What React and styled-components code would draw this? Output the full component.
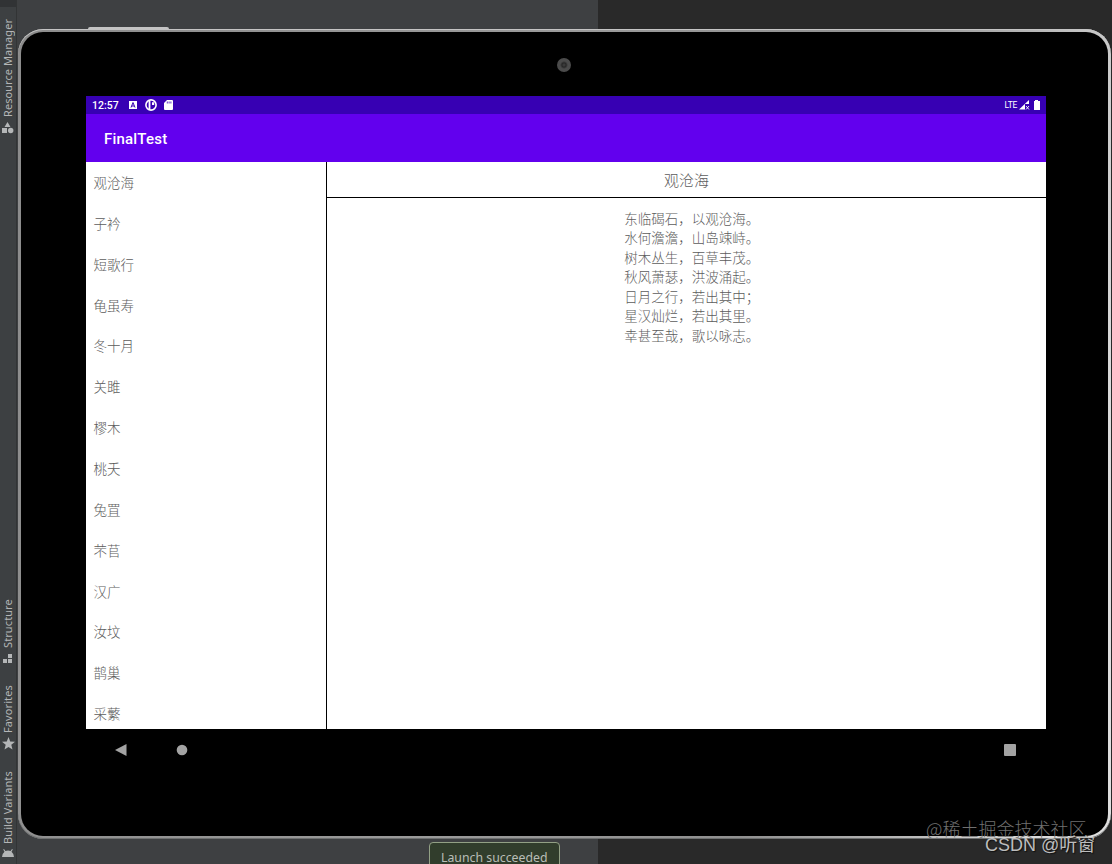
import React, { useState } from "react";
import styled, { createGlobalStyle } from "styled-components";

const GlobalStyle = createGlobalStyle`
    * {
        box-sizing: border-box;
    }

    body {
        margin: 0;
        overflow: hidden;
        background: #3c3f41;
        font-family: Roboto, "Noto Sans CJK SC", sans-serif;
    }
`;

const Page = styled.div`
    position: relative;
    display: flex;
    width: 1112px;
    height: 864px;
    overflow: hidden;
`;

const ToolRail = styled.aside`
    display: flex;
    flex-direction: column;
    width: 17px;
    flex: none;
    padding-top: 17px;
    background: linear-gradient(#313335 7px, #3d4042 7px);
    border-right: 1px solid #323435;
`;

const ToolTab = styled.div`
    display: flex;
    flex-direction: column;
    align-items: center;
    gap: ${(props) => props.$gap || 5}px;
    width: 16px;
    height: ${(props) => props.$height}px;
    margin-top: ${(props) => props.$offset || 0}px;
    color: #b4b6b7;

    svg {
        display: block;
        flex: none;
    }
`;

const ToolLabel = styled.span`
    height: ${(props) => props.$length}px;
    writing-mode: vertical-rl;
    transform: rotate(180deg);
    font-family: "Noto Sans", sans-serif;
    font-size: 11px;
    line-height: 16px;
    letter-spacing: ${(props) => props.$spacing || 0}px;
    white-space: nowrap;
`;

const Workspace = styled.main`
    flex: 1;
    padding: 29px 1px 0 1px;
    background: linear-gradient(90deg, #3e4042 581px, #292929 581px);
`;

const Device = styled.div`
    position: relative;
    width: 1093px;
    height: 810px;
    padding: 3px;
    border-radius: 25px;
    background: linear-gradient(100deg, #8c8c8c 0%, #9a9a9a 45%, #909090 70%, #dedede 95%);
    box-shadow: inset 0 1px 0 #c4c4c4, inset 0 -1px 0 #6e7070;
`;

const PowerKey = styled.div`
    position: absolute;
    top: -2px;
    left: 70px;
    width: 81px;
    height: 3px;
    border-radius: 2px 2px 0 0;
    background: #c4c4c4;
`;

const Bezel = styled.div`
    display: flex;
    flex-direction: column;
    height: 100%;
    padding: 26px 62px 0 65px;
    border-radius: 22px;
    background: #000;
`;

const Camera = styled.div`
    width: 14px;
    height: 14px;
    margin: 0 0 24px 471px;
    border-radius: 50%;
    background: radial-gradient(circle, #3a3a3a 0 1px, #262626 2px, #4b4b4b 4px);
`;

const Screen = styled.div`
    width: 960px;
    height: 633px;
    display: flex;
    flex-direction: column;
    overflow: hidden;
    background: #fff;
`;

const StatusBar = styled.div`
    display: flex;
    align-items: center;
    height: 18px;
    flex: none;
    padding: 0 4px 0 6px;
    background: #3700b3;
    color: #fff;

    svg {
        display: block;
    }
`;

const Clock = styled.span`
    width: 37px;
    font-size: 10.5px;
    font-weight: 500;
`;

const StatusIcons = styled.div`
    display: flex;
    align-items: center;
    gap: 7.5px;
`;

const Signal = styled.div`
    display: flex;
    align-items: center;
    margin-left: auto;
    font-size: 8.5px;
    letter-spacing: -0.3px;
    gap: 2px;
`;

const AppBar = styled.header`
    height: 48px;
    flex: none;
    padding-left: 18px;
    background: #6200ee;
    color: #fff;
    font-size: 15px;
    font-weight: 500;
    line-height: 51px;
    letter-spacing: 0.2px;
`;

const Content = styled.div`
    display: flex;
    flex: 1;
    min-height: 0;
`;

const PoemList = styled.ul`
    width: 241px;
    margin: 0;
    padding: 0;
    overflow: hidden;
    list-style: none;
    border-right: 1px solid #000;
`;

const PoemItem = styled.li`
    height: 40.87px;
    padding-left: 7.5px;
    color: #5c5c5c;
    font-family: "Noto Sans CJK SC", sans-serif;
    font-size: 13.5px;
    font-weight: 300;
    line-height: 40px;
    cursor: pointer;
`;

const PoemPane = styled.section`
    flex: 1;
    color: #5c5c5c;
    font-family: "Noto Sans CJK SC", sans-serif;
    font-weight: 300;
    text-align: center;
`;

const PoemTitle = styled.div`
    height: 36px;
    border-bottom: 1px solid #000;
    font-size: 15px;
    line-height: 35px;
`;

const PoemText = styled.div`
    padding: 10.5px 0 0 10.5px;
    font-size: 13.5px;
    line-height: 19.5px;
    white-space: pre-line;
`;

const NavBar = styled.nav`
    display: flex;
    align-items: center;
    width: 960px;
    height: 42px;
    padding: 0 30px 0 29px;

    svg:last-child {
        margin-left: auto;
    }

    svg:nth-child(2) {
        margin-left: 49px;
    }
`;

const Toast = styled.div`
    position: absolute;
    left: 429px;
    top: 842px;
    width: 131px;
    height: 30px;
    padding-left: 11px;
    border: 1px solid #92a085;
    border-radius: 4px;
    background: #313d2c;
    color: #b9bdb7;
    font-family: "Noto Sans", sans-serif;
    font-size: 12.3px;
    line-height: 30px;
    white-space: nowrap;
`;

const Watermark = styled.div`
    position: absolute;
    left: ${(props) => props.$left}px;
    top: ${(props) => props.$top}px;
    color: ${(props) => props.$color};
    font-family: ${(props) => props.$font || '"Noto Sans CJK SC"'}, "Noto Sans CJK SC", sans-serif;
    font-size: ${(props) => props.$size}px;
    font-weight: ${(props) => props.$weight || 300};
    line-height: 24px;
    white-space: nowrap;
    text-shadow: ${(props) => props.$shadow || "none"};
`;

const poems = [
    {
        title: "观沧海",
        text: [
            "东临碣石，以观沧海。",
            "水何澹澹，山岛竦峙。",
            "树木丛生，百草丰茂。",
            "秋风萧瑟，洪波涌起。",
            "日月之行，若出其中；",
            "星汉灿烂，若出其里。",
            "幸甚至哉，歌以咏志。",
        ].join("\n"),
    },
    { title: "子衿" },
    { title: "短歌行" },
    { title: "龟虽寿" },
    { title: "冬十月" },
    { title: "关雎" },
    { title: "樛木" },
    { title: "桃夭" },
    { title: "兔罝" },
    { title: "芣苢" },
    { title: "汉广" },
    { title: "汝坟" },
    { title: "鹊巢" },
    { title: "采蘩" },
];

function ToolWindows() {
    return (
        <ToolRail>
            <ToolTab $height={117}>
                <ToolLabel $length={100} $spacing={0.06}>Resource Manager</ToolLabel>
                <svg width="12" height="12" viewBox="0 0 12 12" fill="currentColor">
                    <path d="M5.5 0 8.5 5H2.5zM0 6h5v5H0z" />
                    <circle cx="8.7" cy="8.5" r="2.7" />
                </svg>
            </ToolTab>
            <ToolTab $height={67} $offset={465} $gap={6}>
                <ToolLabel $length={49} $spacing={0.1}>Structure</ToolLabel>
                <svg width="10" height="10" viewBox="0 0 10 10" fill="currentColor">
                    <path d="M5 0h4v4H5zM0 5h4v4H0zM5 5h4v4H5z" />
                </svg>
            </ToolTab>
            <ToolTab $height={67} $offset={20} $gap={4}>
                <ToolLabel $length={49} $spacing={0.1}>Favorites</ToolLabel>
                <svg width="13" height="13" viewBox="0 0 13 13" fill="currentColor">
                    <path d="M6.5 0 8.2 4.5 13 4.8 9.3 7.8 10.5 12.5 6.5 9.9 2.5 12.5 3.7 7.8 0 4.8 4.8 4.5z" />
                </svg>
            </ToolTab>
            <ToolTab $height={100} $offset={19}>
                <ToolLabel $length={75} $spacing={0.1}>Build Variants</ToolLabel>
                <svg width="12" height="9" viewBox="0 0 12 9" fill="currentColor">
                    <path d="M1.2.4 2 0l1.4 2.1a6 6 0 0 1 5.2 0L10 0l.8.4-1.3 2.3Q11.7 4.4 12 8H0Q.3 4.4 2.5 2.7z" />
                </svg>
            </ToolTab>
        </ToolRail>
    );
}

function DeviceStatus() {
    return (
        <StatusBar>
            <Clock>12:57</Clock>
            <StatusIcons>
                <svg width="8" height="8" viewBox="0 0 8 8">
                    <path d="M0 0h8v8H0z" fill="#fff" />
                    <path d="M2 6.5 4 1.5 6 6.5M2.8 5h2.4" fill="none" stroke="#3700b3" />
                </svg>
                <svg width="12" height="12" viewBox="0 0 12 12">
                    <circle cx="6" cy="6" r="5.1" fill="none" stroke="#fff" strokeWidth="1.6" />
                    <path d="M3.6 1.5h1.8v9.2H3.6zM7 3.2h2.2v2.9H7z" fill="#fff" />
                </svg>
                <svg width="9" height="10" viewBox="0 0 9 10">
                    <path d="M3 0h5q1 0 1 1v8q0 1-1 1H1q-1 0-1-1V3z" fill="#fff" />
                    <path d="M3.3 1.5v2M5.1 1.5v2M6.9 1.5v2" stroke="#3700b3" strokeWidth=".8" />
                </svg>
            </StatusIcons>
            <Signal>
                LTE
                <svg width="11" height="10" viewBox="0 0 11 10">
                    <path d="M0 9.5 10 0v4H6v5.5z" fill="#fff" />
                    <path d="M7 6l3 3.5M10 6 7 9.5" stroke="#fff" strokeWidth=".9" />
                </svg>
            </Signal>
            <svg width="12" height="10" viewBox="0 0 12 10">
                <path d="M5 0h3v1h2v9H4V1h1z" fill="#fff" />
            </svg>
        </StatusBar>
    );
}

function App() {
    const [selected, setSelected] = useState(0);
    const poem = poems[selected];

    return (
        <Page>
            <GlobalStyle />
            <ToolWindows />
            <Workspace>
                <Device>
                    <PowerKey />
                    <Bezel>
                        <Camera />
                        <Screen>
                            <DeviceStatus />
                            <AppBar>FinalTest</AppBar>
                            <Content>
                                <PoemList>
                                    {poems.map((item, index) => (
                                        <PoemItem key={item.title} onClick={() => setSelected(index)}>
                                            {item.title}
                                        </PoemItem>
                                    ))}
                                </PoemList>
                                <PoemPane>
                                    <PoemTitle>{poem.title}</PoemTitle>
                                    <PoemText>{poem.text}</PoemText>
                                </PoemPane>
                            </Content>
                        </Screen>
                        <NavBar>
                            <svg width="12" height="14" viewBox="0 0 12 14">
                                <path d="M11.5 1v12L0 7z" fill="#a3a3a3" />
                            </svg>
                            <svg width="12" height="12" viewBox="0 0 12 12">
                                <circle cx="6" cy="6" r="5.3" fill="#a3a3a3" />
                            </svg>
                            <svg width="12" height="12" viewBox="0 0 12 12">
                                <rect width="12" height="12" rx="1" fill="#a3a3a3" />
                            </svg>
                        </NavBar>
                    </Bezel>
                </Device>
            </Workspace>
            <Toast>Launch succeeded</Toast>
            <Watermark $left={926} $top={816} $size={18} $color="#707070">
                @稀土掘金技术社区
            </Watermark>
            <Watermark
                $left={985}
                $top={833}
                $size={18}
                $weight={400}
                $color="#bdbdbd"
                $font='"Liberation Sans"'
                $shadow="1px 1px 1px #111"
            >
                CSDN @听窗
            </Watermark>
        </Page>
    );
}

export default App;
